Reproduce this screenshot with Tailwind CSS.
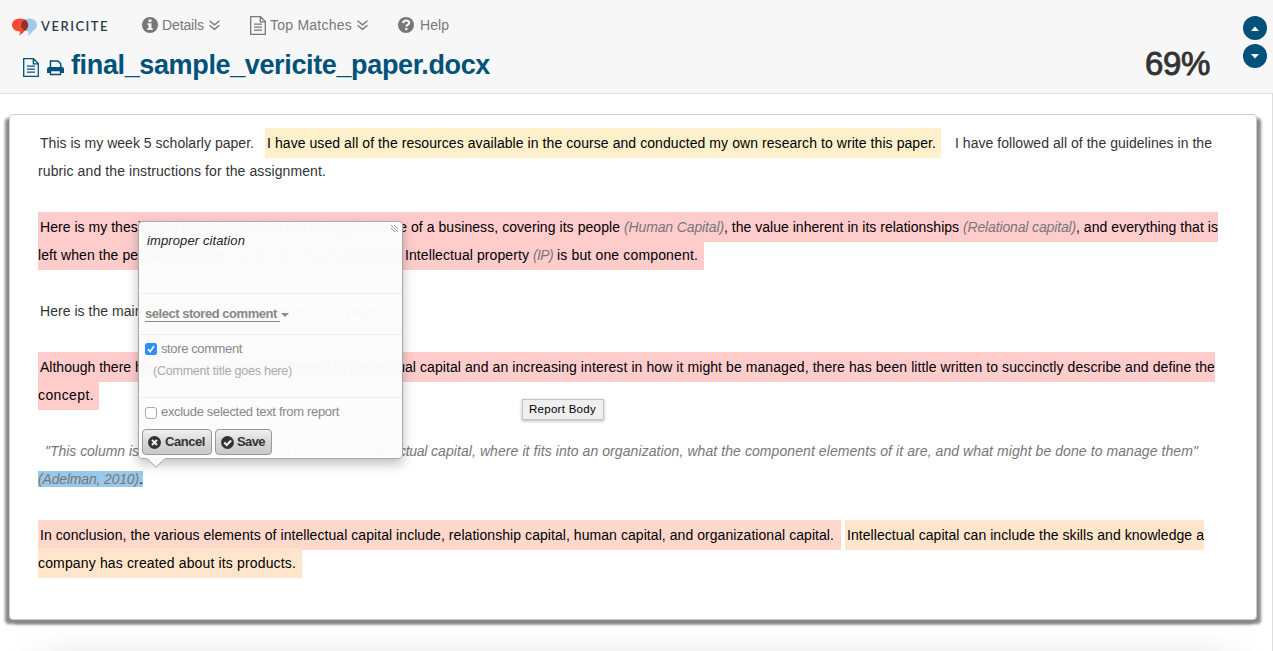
<!DOCTYPE html>
<html lang="en">
<head>
<meta charset="utf-8">
<title>VeriCite report</title>
<script src="https://cdn.jsdelivr.net/npm/@tailwindcss/browser@4"></script>
</head>
<body class="h-[651px] w-[1273px] overflow-hidden bg-white font-['Liberation_Sans',Arial,sans-serif] text-sm text-[#333]">
<header class="flex h-[94px] justify-between border-b border-[#e0e0e0] bg-[#f7f7f7]">
  <div class="flex flex-col">
    <nav class="flex h-[50px] items-center pl-3 text-[#777]">
      <svg class="mt-1 h-[18px] w-[25px]" viewBox="0 0 25 18">
        <path d="M17 .5c4.500 0 8 2.800 8 6.500 0 2.600-1.600 4.600-4 5.700-1.500 2-3 3.800-5 4.800l.8-4C12 13.500 9 10.700 9 7s3.500-6.500 8-6.500z" fill="#9fcbe6"/>
        <path d="M8 .5c4.500 0 8.200 2.800 8.200 6.500 0 3-2 5-4 6.300-1 1.700-3 3.200-5 4.200l1-4C3.500 13.500 0 10.700 0 7S3.500.5 8 .5z" fill="#f9492f"/>
        <path d="M12.700 1.700c2.200 1.200 3.500 3.100 3.500 5.300 0 2.400-1.300 4.300-3.100 5.600C10.500 11.600 9 9.500 9 7c0-2.200 1.500-4.200 3.700-5.300z" fill="#96302e"/>
      </svg>
      <span data-fit class="ml-1 mt-[3px] w-[68px] whitespace-pre font-[Lato,sans-serif] text-[13px] font-semibold text-[#2c3d4c]">VERICITE</span>
      <svg class="ml-[33px] size-4" viewBox="0 0 16 16"><circle cx="8" cy="8" r="8" fill="#777"/><path d="M6.500 2.500h3V5h-3zM5.500 6.300h4v5h1.200V13H5.300v-1.700h1.200V8h-1z" fill="#f7f7f7"/></svg>
      <span data-fit class="ml-1 w-[42px] whitespace-pre">Details</span>
      <svg class="ml-[5px] h-[11px] w-[11px]" viewBox="0 0 11 11" fill="none" stroke="#777" stroke-width="1.300"><path d="M.5.800l5 4 5-4M.5 5.300l5 4 5-4"/></svg>
      <svg class="ml-[30px] h-[19px] w-4" viewBox="0 0 16 19" fill="none" stroke="#777" stroke-width="1.300"><path d="M.7.700h9.800l4.800 4.800v12.800H.7zM10.300.800v5h5M4 8.200h8M4 11.200h8M4 14.200h8"/></svg>
      <span data-fit class="ml-1 w-[82px] whitespace-pre">Top Matches</span>
      <svg class="ml-[5px] h-[11px] w-[11px]" viewBox="0 0 11 11" fill="none" stroke="#777" stroke-width="1.300"><path d="M.5.800l5 4 5-4M.5 5.300l5 4 5-4"/></svg>
      <svg class="ml-[30px] size-4" viewBox="0 0 16 16"><circle cx="8" cy="8" r="8" fill="#777"/><path d="M5 6.200C5.200 4 6.300 3.400 8 3.400c2 0 3.200 1 3.200 2.500C11.200 7.800 8.300 7.600 8.300 9.800" fill="none" stroke="#f7f7f7" stroke-width="2"/><rect x="7.200" y="11" width="2.200" height="2.200" fill="#f7f7f7"/></svg>
      <span data-fit class="ml-[6px] w-[29px] whitespace-pre">Help</span>
    </nav>
    <div class="flex h-[30px] items-center pl-[23px]">
      <svg class="mt-[5px] h-[19px] w-4" viewBox="0 0 16 19" fill="none" stroke="#00527a" stroke-width="1.300"><path d="M.7.700h9.800l4.800 4.800v12.800H.7zM10.300.800v5h5M4 8.200h8M4 11.200h8M4 14.200h8"/></svg>
      <svg class="ml-2 mt-[5px] h-[16px] w-[17px]" viewBox="0 0 17 16"><path d="M3.500 8V1h7.500l2.700 2.700V8" fill="none" stroke="#00527a" stroke-width="1.500"/><path d="M2 7h13q2 0 2 2v4h-3.500v-2.500h-10V13H0V9q0-2 2-2z" fill="#00527a"/><path d="M3.500 10.500h10v4h-10z" fill="#f7f7f7" stroke="#00527a" stroke-width="1.400"/></svg>
      <h1 data-fit class="ml-[7px] w-[419px] whitespace-pre text-[27px] leading-[30px] font-bold text-[#00527a]">final_sample_vericite_paper.docx</h1>
    </div>
  </div>
  <div class="flex pr-[6px]">
    <div data-fit class="mt-[44px] mr-[33px] w-[65px] whitespace-pre text-[33px] leading-[40px] [-webkit-text-stroke:0.900px_#333]">69%</div>
    <div class="flex flex-col gap-1 pt-4">
      <svg class="size-6" viewBox="0 0 24 24"><circle cx="12" cy="12" r="12" fill="#00527a"/><path d="M8 15l4-4.500 4 4.500z" fill="#fff"/></svg>
      <svg class="size-6" viewBox="0 0 24 24"><circle cx="12" cy="12" r="12" fill="#00527a"/><path d="M8 10l4 4.500 4-4.500z" fill="#fff"/></svg>
    </div>
  </div>
</header>

<main class="relative h-[557px] border-r border-[#ddd] pt-5 pl-[9px]">
  <article class="flex h-[506px] w-[1248px] flex-col gap-7 rounded border border-[#ccc] bg-white pt-[14px] pl-[28px] whitespace-pre shadow-[-4px_4px_3px_0_#888,4px_4px_3px_0_#888]">
    <div class="flex flex-col">
      <div class="flex h-7 items-center"><span data-fit class="ml-[2px] w-[214px]">This is my week 5 scholarly paper.</span><div class="ml-[11px] flex h-[30px] w-[676px] items-center bg-[#fff0cc] pl-[2px] text-black"><span data-fit class="w-[669px]">I have used all of the resources available in the course and conducted my own research to write this paper.</span></div><span data-fit class="ml-[14px] w-[257px]">I have followed all of the guidelines in the</span></div>
      <div class="flex h-7 items-center"><span data-fit class="w-[288px]">rubric and the instructions for the assignment.</span></div>
    </div>
    <div class="flex flex-col text-black">
      <div class="flex h-7 items-center"><div class="flex h-[30px] w-[1180px] items-center bg-[#ffcccc] pl-[2px]"><span data-fit class="w-[367px]">Here is my thesis: Intellectual capital is the intangible value</span><span data-fit class="w-[217px]"> of a business, covering its people </span><i data-fit class="w-[100px] text-[#777]">(Human Capital)</i><span data-fit class="w-[239px]">, the value inherent in its relationships </span><i data-fit class="w-[113px] text-[#777]">(Relational capital)</i><span data-fit class="w-[142px]">, and everything that is</span></div></div>
      <div class="flex h-7 items-center"><div class="flex h-[30px] w-[666px] items-center bg-[#ffcccc]"><span data-fit class="w-[190px]">left when the people go home </span><i data-fit class="w-[113px] text-[#777]">(Structural capital)</i><span data-fit class="w-[64px]">, of which </span><span data-fit class="w-[128px]">Intellectual property </span><i data-fit class="w-[20px] text-[#777]">(IP)</i><span data-fit class="w-[145px]"> is but one component.</span></div></div>
    </div>
    <div class="flex h-7 items-center text-[#333]"><span data-fit class="ml-[2px] w-[346px]">Here is the main point I would like to make in my paper:</span></div>
    <div class="flex flex-col text-black">
      <div class="flex h-7 items-center"><div class="flex h-[30px] w-[1177px] items-center bg-[#ffcccc] pl-[2px]"><span data-fit class="w-[95px]">Although there </span><span data-fit class="w-[281px]">has been an increasing interest in intellectual</span><span data-fit class="w-[799px]"> capital and an increasing interest in how it might be managed, there has been little written to succinctly describe and define the</span></div></div>
      <div class="flex h-7 items-center"><div class="flex h-[30px] w-[61px] items-center bg-[#ffcccc]"><span data-fit class="w-[56px]">concept.</span></div></div>
    </div>
    <div class="flex flex-col text-[#777] italic">
      <div class="flex h-7 items-center"><span data-fit class="ml-[7px] w-[94px]">"This column is</span><span data-fit class="w-[144px]"> intended to provide a</span><span data-fit class="w-[144px]">n overview of intellectual</span><span data-fit class="w-[771px]"> capital, where it fits into an organization, what the component elements of it are, and what might be done to manage them"</span></div>
      <div class="flex h-7 items-center"><div class="flex h-4 items-center bg-[#99c8ea]"><span data-fit class="w-[101px]">(Adelman, 2010)</span><span class="w-1 text-black not-italic">.</span></div></div>
    </div>
    <div class="flex flex-col text-black">
      <div class="flex h-7 items-center gap-1"><div class="flex h-[30px] w-[803px] items-center bg-[#ffd8cc] pl-[2px]"><span data-fit class="w-[794px]">In conclusion, the various elements of intellectual capital include, relationship capital, human capital, and organizational capital.</span></div><div class="flex h-[30px] w-[359px] items-center bg-[#ffe5cc] pl-[2px]"><span data-fit class="w-[357px]">Intellectual capital can include the skills and knowledge a</span></div></div>
      <div class="flex h-7 items-center"><div class="flex h-[30px] w-[264px] items-center bg-[#ffe5cc]"><span data-fit class="w-[258px]">company has created about its products.</span></div></div>
    </div>
  </article>
  <div class="mt-[10px] mr-2 h-[21px] bg-linear-to-b from-white to-[#f4f4f4] mask-x-from-95%"></div>

  <!-- Comment popover -->
  <section class="absolute top-[127px] left-[138px] flex h-[238px] w-[265px] flex-col rounded border border-[#a8a8a8] bg-[#fcfcfc]/98 whitespace-pre text-[#888] shadow-[0_5px_12px_rgba(0,0,0,0.25)]">
    <div class="flex h-[72px] items-start justify-between border-b border-[#eee] pt-[2px] pr-[3px] pl-2">
      <i data-fit class="mt-[8px] w-[98px] text-[13px] leading-[18px] text-[#222]">improper citation</i>
      <svg class="size-[9px]" viewBox="0 0 9 9" stroke="#888" stroke-width=".9"><path d="M1 1l7 7M4 1l4 4M1 4l4 4"/></svg>
    </div>
    <div class="flex h-[41px] items-center border-b border-[#eee] pl-[6px]">
      <b data-fit class="w-[135px] border-b border-[#888] text-[13px] leading-[14px]">select stored comment </b>
      <svg class="mt-[2px] ml-[1px] h-1 w-2" viewBox="0 0 8 4"><path d="M0 0h8L4 4z" fill="#888"/></svg>
    </div>
    <div class="flex h-[63px] flex-col border-b border-[#eee] pt-1 pl-[6px] text-[13px]">
      <div class="flex h-[20px] items-center">
        <svg class="mr-1 size-3" viewBox="0 0 12 12"><rect width="12" height="12" rx="2.500" fill="#2f8cf8"/><path d="M3 6.200l2.200 2.500L9 3" fill="none" stroke="#fff" stroke-width="1.600"/></svg>
        <span data-fit class="w-[81px]">store comment</span>
      </div>
      <span data-fit class="mt-[2px] ml-2 w-[139px] text-[12.500px] leading-[20px] text-[#aaa]">(Comment title goes here)</span>
    </div>
    <div class="flex h-[29px] items-center pl-[6px] text-[13px]">
      <span class="mr-1 size-3 rounded-[3px] border border-[#aaa] bg-white"></span>
      <span data-fit class="w-[178px]">exclude selected text from report</span>
    </div>
    <div class="mt-[2px] flex gap-[3px] pl-[3px] text-[13px] font-bold text-[#333]">
      <div class="flex h-[26px] w-[70px] items-center rounded border border-[#999] bg-linear-to-b from-[#f0f0f0] via-[#d8d8d8] to-[#c8c8c8] pl-[5px]">
        <svg class="mr-1 size-[13px]" viewBox="0 0 13 13"><circle cx="6.500" cy="6.500" r="6.500" fill="#333"/><path d="M4 4l5 5M9 4L4 9" stroke="#eee" stroke-width="2.100"/></svg>
        <span data-fit class="w-[40px]">Cancel</span>
      </div>
      <div class="flex h-[26px] w-[57px] items-center rounded border border-[#999] bg-linear-to-b from-[#f0f0f0] via-[#d8d8d8] to-[#c8c8c8] pl-[5px]">
        <svg class="mr-[3px] size-[13px]" viewBox="0 0 13 13"><circle cx="6.500" cy="6.500" r="6.500" fill="#333"/><path d="M3.200 6.500l2.500 2.600 4.400-4.600" fill="none" stroke="#eee" stroke-width="2.100"/></svg>
        <span data-fit class="w-[28px]">Save</span>
      </div>
    </div>
    <svg class="absolute top-[236px] left-[7px] h-[10px] w-5" viewBox="0 0 20 10"><path d="M0 0l10 9.300L20 0z" fill="#fafafa"/><path d="M1 .5l9 8.800L19 .5" fill="none" stroke="#a0a0a0"/></svg>
  </section>

  <!-- Tooltip -->
  <div class="absolute top-[305px] left-[522px] flex h-[21px] w-[82px] items-center border border-[#c4c4c4] bg-[#efefef] pl-[6px] whitespace-pre text-black shadow-[0_1px_3px_rgba(0,0,0,0.3)]">
    <span data-fit class="w-[67px] text-[11.500px]">Report Body</span>
  </div>
</main>
<script>
  // Spread each run's letters so that it fills the width of its box.
  function fit(el) {
    el.style.letterSpacing = '0px';
    var range = document.createRange();
    range.selectNodeContents(el);
    var natural = range.getBoundingClientRect().width;
    el.style.letterSpacing = (el.clientWidth - natural) / el.textContent.length + 'px';
  }
  var observer = new ResizeObserver(function (entries) {
    entries.forEach(function (entry) { fit(entry.target); });
  });
  document.querySelectorAll('[data-fit]').forEach(function (el) {
    el.classList.add('shrink-0');
    observer.observe(el);
  });
  window.addEventListener('load', function () {
    document.querySelectorAll('[data-fit]').forEach(fit);
  });
</script>
</body>
</html>
